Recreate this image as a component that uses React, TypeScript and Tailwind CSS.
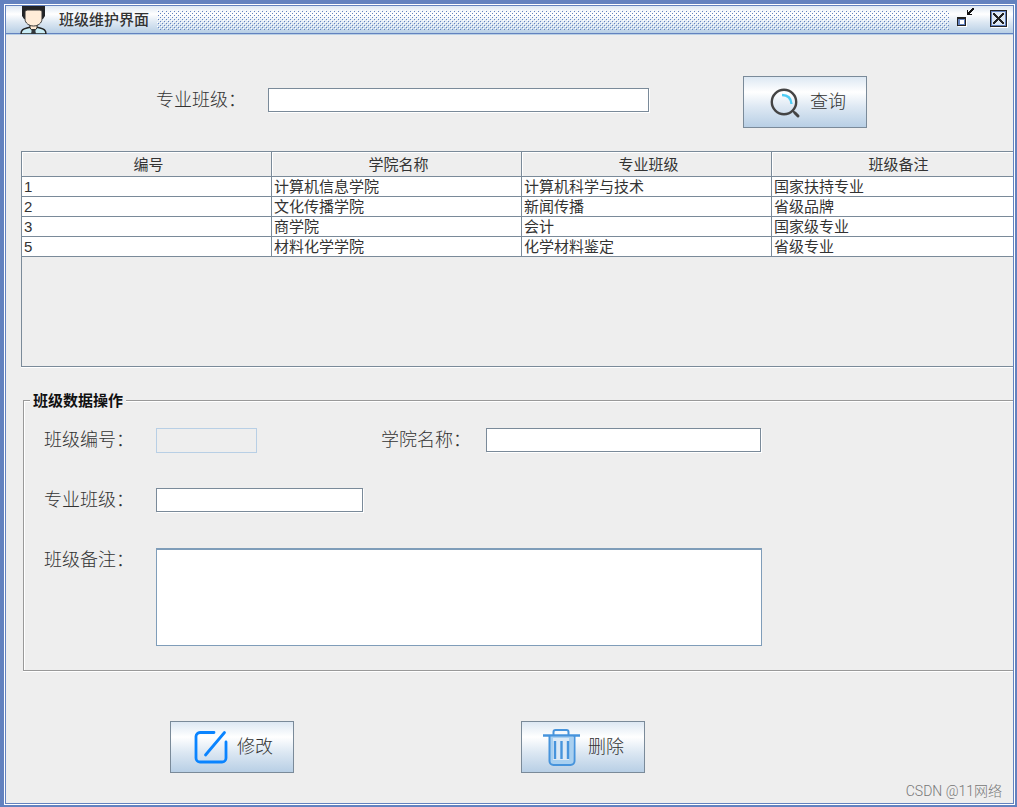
import { useState } from 'react';
import type { ReactNode } from 'react';

interface ClassRow {
  id: number;
  college: string;
  major: string;
  remark: string;
}

const columns = ['编号', '学院名称', '专业班级', '班级备注'];

const rows: ClassRow[] = [
  { id: 1, college: '计算机信息学院', major: '计算机科学与技术', remark: '国家扶持专业' },
  { id: 2, college: '文化传播学院', major: '新闻传播', remark: '省级品牌' },
  { id: 3, college: '商学院', major: '会计', remark: '国家级专业' },
  { id: 5, college: '材料化学学院', major: '化学材料鉴定', remark: '省级专业' },
];

const labelClass = 'shrink-0 text-lg leading-6 font-light text-[#333333]';
const inputClass =
  'h-6 border border-[#7a8a99] bg-white px-1 text-sm shadow-[1px_1px_0_#ffffff] outline-none';

function UserIcon() {
  return (
    <svg width="28" height="28" viewBox="0 0 28 28" aria-hidden="true">
      <path d="M1 28c0-4 2-5 6-6l4-1h5l4 1c4 1 6 2 6 6z" fill="#c9ecf5" stroke="#222" strokeWidth="1.4" />
      <path d="M10 17v5l3.5 4 3.5-4v-5z" fill="#ffe9d2" stroke="#222" />
      <path d="M12 23h3l1 5h-5z" fill="#33383c" />
      <path d="M2 0h23v10l-2 3H4l-2-3z" fill="#222426" />
      <path d="M5 5l2-1h13l2 1v8c0 4-4 7-8.5 7S5 17 5 13z" fill="#ffecd8" stroke="#333" strokeWidth="1" />
    </svg>
  );
}

function SearchIcon() {
  return (
    <svg width="40" height="40" viewBox="0 0 40 40" fill="none" aria-hidden="true">
      <circle cx="20" cy="20" r="12.2" stroke="#444444" strokeWidth="2.4" />
      <path d="M29 29l2 2" stroke="#444444" strokeWidth="2" />
      <path d="M31 31l3 3" stroke="#444444" strokeWidth="3" strokeLinecap="round" />
      <path d="M18 13c6 0 9 3 9.5 9" stroke="#4fcdf5" strokeWidth="2.4" />
    </svg>
  );
}

function EditIcon() {
  return (
    <svg width="40" height="40" viewBox="0 0 40 40" fill="none" stroke="#0a84ff" strokeLinecap="round" aria-hidden="true">
      <path d="M23 5.5H9a4 4 0 0 0-4 4V31a4 4 0 0 0 4 4h22a4 4 0 0 0 4-4V15" strokeWidth="2.8" />
      <path d="M33.5 5.5L14.5 28" strokeWidth="2.8" />
    </svg>
  );
}

function TrashIcon() {
  return (
    <svg width="40" height="40" viewBox="0 0 40 40" fill="none" stroke="#4794dc" aria-hidden="true">
      <path d="M8 10h23v27H8z" fill="#a9d0f0" stroke="none" />
      <path d="M11 11h16v22H11z" fill="#dbe9f6" stroke="none" />
      <path d="M1 8.5h37" strokeWidth="2.4" />
      <path d="M11.5 8V5a2 2 0 0 1 2-2h11a2 2 0 0 1 2 2v3" strokeWidth="2" />
      <path d="M7.5 9v25a4 4 0 0 0 4 4h17a4 4 0 0 0 4-4V9" strokeWidth="2" />
      <path d="M13 14v18M19.5 14v18M26 14v18" strokeWidth="2.4" />
    </svg>
  );
}

function MetalButton({ icon, children }: { icon: ReactNode; children: ReactNode }) {
  return (
    <button
      type="button"
      className="flex h-[52px] w-[124px] shrink-0 items-center justify-center gap-1.5 border border-[#7a8a99] bg-[linear-gradient(#dde8f3,#ffffff_30%,#dde8f3_60%,#b8cfe5)] text-lg leading-6 font-light text-[#333333]"
    >
      {icon}
      {children}
    </button>
  );
}

function TitleBar() {
  return (
    <header className="flex h-7 items-center border-b border-[#6382bf] bg-[linear-gradient(#dde8f3,#ffffff_30%,#dde8f3_60%,#b8cfe5)] pr-[5px] pl-3.5 shadow-[0_1px_0_#b8cfe5]">
      <UserIcon />
      <h1 className="ml-[11px] text-[15px] leading-5 font-medium text-[#333333]">班级维护界面</h1>
      <svg className="ml-2 h-5 min-w-0 flex-1" shapeRendering="crispEdges" aria-hidden="true">
        <defs>
          <pattern id="bumps" width="4" height="4" patternUnits="userSpaceOnUse">
            <path d="M0 0h1v1H0zM2 2h1v1H2z" fill="#ffffff" />
            <path d="M1 1h1v1H1zM3 3h1v1H3z" fill="#6382bf" />
          </pattern>
        </defs>
        <rect width="100%" height="100%" fill="url(#bumps)" />
      </svg>
      <button type="button" aria-label="还原" className="ml-2">
        <svg width="18" height="24" viewBox="0 0 18 24" shapeRendering="crispEdges">
          <path d="M1 10h9v9H1z" fill="#ffffff" />
          <path d="M0 9h9v9H0z" fill="#222222" />
          <path d="M1 11h7v6H1z" fill="#6382bf" />
          <path d="M3 12h4v4H3z" fill="#ffffff" />
          <path
            d="M15 0h2v2h-1v1h-1v1h-1v1h-1v1h2v1h-5V2h1v2h1V3h1V2h1V1h1z"
            fill="#111111"
          />
        </svg>
      </button>
      <button type="button" aria-label="关闭" className="ml-[15px]">
        <svg width="18" height="20" viewBox="0 0 18 20" shapeRendering="crispEdges">
          <path d="M1.5 1.5h16v16h-16z" fill="none" stroke="#ffffff" />
          <path d="M.5.5h16v16H.5z" fill="#dde8f3" stroke="#222222" />
          <path d="M1.5 1.5h14v14h-14z" fill="none" stroke="#6382bf" />
          <path
            d="M3 3h2v1h1v1h1v1h1v1h1V6h1V5h1V4h1V3h2v2h-1v1h-1v1h-1v1h-1v1h1v1h1v1h1v1h1v2h-2v-1h-1v-1h-1v-1h-1v-1H8v1H7v1H6v1H5v1H3v-2h1v-1h1v-1h1V9h1V8H6V7H5V6H4V5H3z"
            fill="#222222"
          />
        </svg>
      </button>
    </header>
  );
}

function ClassTable() {
  return (
    <div className="mt-[23px] ml-[15px] h-[216px] overflow-hidden border-y border-l border-[#7a8a99] shadow-[0_1px_0_#ffffff]">
      <table className="w-full min-w-[1000px] table-fixed border-separate border-spacing-0 text-[15px] leading-[19px] text-[#333333]">
        <thead>
          <tr>
            {columns.map((column) => (
              <th
                key={column}
                className="h-[25px] border-r border-b border-[#7a8a99] py-0 pr-0 pl-1 font-normal shadow-[inset_1px_1px_0_#ffffff]"
              >
                {column}
              </th>
            ))}
          </tr>
        </thead>
        <tbody className="bg-white">
          {rows.map((row) => (
            <tr key={row.id}>
              {[row.id, row.college, row.major, row.remark].map((value, index) => (
                <td key={index} className="h-5 border-r border-b border-[#7a8a99] px-0.5 py-0">
                  {value}
                </td>
              ))}
            </tr>
          ))}
        </tbody>
      </table>
    </div>
  );
}

export default function App() {
  const [keyword, setKeyword] = useState('');
  const [college, setCollege] = useState('');
  const [major, setMajor] = useState('');
  const [remark, setRemark] = useState('');

  return (
    <div
      lang="zh-CN"
      className="flex min-h-screen flex-col border-t-4 border-r-2 border-b-2 border-l-4 border-[#6382bf] bg-white p-px font-['Liberation_Sans','Noto_Sans_CJK_SC',sans-serif]"
    >
      <div className="relative flex flex-1 flex-col border border-[#6382bf] bg-[#eeeeee]">
        <TitleBar />
        <main className="overflow-hidden pt-px pb-[30px]">
          <form className="flex items-start pt-[41px] pl-[150px]">
            <div className="flex pt-3">
              <label htmlFor="keyword" className={`${labelClass} w-28`}>
                专业班级：
              </label>
              <input
                id="keyword"
                value={keyword}
                onChange={(e) => setKeyword(e.target.value)}
                className={`${inputClass} w-[381px]`}
              />
            </div>
            <div className="ml-[94px]">
              <MetalButton icon={<SearchIcon />}>查询</MetalButton>
            </div>
          </form>

          <ClassTable />

          <fieldset className="mt-[22px] ml-[17px] border-y border-l border-[#999999] pb-6 pl-5 shadow-[inset_1px_1px_0_#ffffff,0_1px_0_#ffffff]">
            <legend className="-ml-3.5 bg-[#eeeeee] px-[3px] pt-0.5 text-[15px] leading-5 font-bold text-[#111111]">
              班级数据操作
            </legend>
            <div className="flex flex-col gap-[35px] pt-[17px]">
              <div className="flex h-[25px] items-start">
                <label htmlFor="classId" className={`${labelClass} w-28`}>
                  班级编号：
                </label>
                <input
                  id="classId"
                  disabled
                  className="h-[25px] w-[101px] border border-[#b8cfe5] bg-[#eeeeee] px-1 text-sm"
                />
                <label htmlFor="college" className={`${labelClass} ml-[124px] w-[105px]`}>
                  学院名称：
                </label>
                <input
                  id="college"
                  value={college}
                  onChange={(e) => setCollege(e.target.value)}
                  className={`${inputClass} w-[275px]`}
                />
              </div>
              <div className="flex h-[25px] items-start">
                <label htmlFor="major" className={`${labelClass} w-28`}>
                  专业班级：
                </label>
                <input
                  id="major"
                  value={major}
                  onChange={(e) => setMajor(e.target.value)}
                  className={`${inputClass} w-[207px]`}
                />
              </div>
              <div className="flex items-start">
                <label htmlFor="remark" className={`${labelClass} w-28`}>
                  班级备注：
                </label>
                <textarea
                  id="remark"
                  value={remark}
                  onChange={(e) => setRemark(e.target.value)}
                  className="h-[98px] w-[606px] resize-none border border-t-2 border-[#7f9db9] bg-white px-1 text-sm outline-none"
                />
              </div>
            </div>
          </fieldset>

          <div className="flex gap-[227px] pt-[50px] pl-[164px]">
            <MetalButton icon={<EditIcon />}>修改</MetalButton>
            <MetalButton icon={<TrashIcon />}>删除</MetalButton>
          </div>
        </main>
        <p className="absolute right-[11px] bottom-0.5 font-[Roboto,'Noto_Sans_CJK_SC',sans-serif] text-sm leading-5 font-light text-[#777777]">
          CSDN @11网络
        </p>
      </div>
    </div>
  );
}
